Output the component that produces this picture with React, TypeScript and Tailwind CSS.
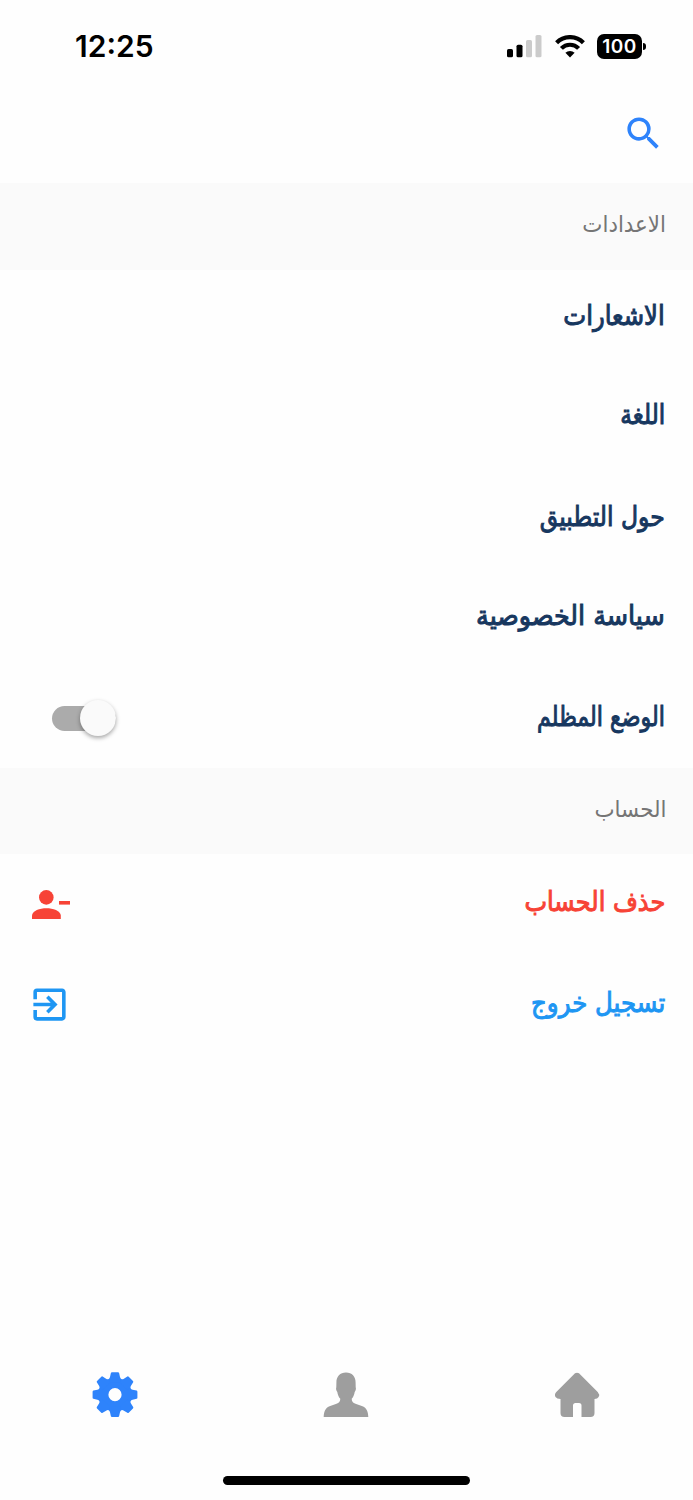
import React from 'react';
import { MdExitToApp, MdSearch } from 'react-icons/md';

interface SettingRowProps {
  label: string;
  className?: string;
  labelClass?: string;
  children?: React.ReactNode;
}

function SignalIcon() {
  return (
    <svg width="35" height="23" viewBox="0 0 35 23">
      <rect x="0" y="14" width="6" height="8.3" rx="1.6" fill="#000" />
      <rect x="9.5" y="9.7" width="6" height="12.6" rx="1.6" fill="#000" />
      <rect x="19" y="5" width="6" height="17.3" rx="1.6" fill="#cbcbcb" />
      <rect x="28.5" y="0" width="6" height="22.3" rx="1.6" fill="#cbcbcb" />
    </svg>
  );
}

function WifiIcon() {
  return (
    <svg width="30" height="23" viewBox="0 0 30 23" fill="none" stroke="#000" strokeWidth="4.2">
      <path d="M1.6 7.7a18.8 18.8 0 0 1 26.8 0" />
      <path d="M6.4 13.4a12 12 0 0 1 17.2 0" />
      <path d="M10.4 17.8a6.6 6.6 0 0 1 9.2 0L15 22.4z" fill="#000" stroke="none" />
    </svg>
  );
}

function RemoveUserIcon() {
  return (
    <svg width="38" height="30" viewBox="0 0 38 30" fill="#f74336">
      <circle cx="14.3" cy="7.4" r="7.3" />
      <path d="M0 29v-3.4C0 20.7 8 18.2 14.4 18.2S28.8 20.7 28.8 25.6V29z" />
      <rect x="27" y="11" width="11" height="3.6" />
    </svg>
  );
}

function GearIcon() {
  return (
    <svg width="46" height="46" viewBox="-23 -22.7 46 46" fill="#2e83fb">
      <path
        fillRule="evenodd"
        d="M0-16.6A16.6 16.6 0 1 0 0 16.6A16.6 16.6 0 1 0 0-16.6ZM0-6.6A6.6 6.6 0 1 1 0 6.6A6.6 6.6 0 1 1 0-6.6Z"
      />
      {[0, 45, 90, 135, 180, 225, 270, 315].map((angle) => (
        <path
          key={angle}
          transform={`rotate(${angle})`}
          d="M-3-22.4H3Q3.9-22.4 4.1-21.6L5-17.6Q5.3-16.2 6.5-15.4L5-12H-5L-6.5-15.4Q-5.3-16.2-5-17.6L-4.1-21.6Q-3.9-22.4-3-22.4Z"
        />
      ))}
    </svg>
  );
}

function PersonIcon() {
  return (
    <svg width="46" height="46" viewBox="0 0 46 46" fill="#9e9e9e">
      <path d="M23 .5C17 .5 13.4 4.5 13.4 10.5L13.3 15.2C12.8 16 13.1 18.5 14.3 20C14.8 23 15.6 25 17.3 26.8C17.3 29.5 16 31 13.5 31.8L6.5 34.3C2 36.3 .9 40 .7 45H45.3C45.1 40 44 36.3 39.5 34.3L32.5 31.8C30 31 28.7 29.5 28.7 26.8C30.4 25 31.2 23 31.7 20C32.9 18.5 33.2 16 32.7 15.2L32.6 10.5C32.6 4.5 29 .5 23 .5Z" />
    </svg>
  );
}

function HomeIcon() {
  return (
    <svg width="46" height="46" viewBox="0 0 46 46" fill="#9e9e9e">
      <path d="M21 1.3Q23 0 25 1.3L43.7 20Q46 22.5 44.6 25Q43.5 27 40.5 27V41Q40.5 45 36.5 45H27.5V33.5Q27.5 31 25 31H21.5Q19 31 19 33.5V45H10.5Q6.5 45 6.5 41V27Q2.8 27 1.5 25Q0 22.5 2.3 20Z" />
    </svg>
  );
}

function SectionTitle({ title, className = '' }: { title: string; className?: string }) {
  return (
    <div className={`flex items-center bg-[#fafafa] pr-[27px] pb-1 text-[23px] text-[#757575] ${className}`}>
      <span className="block origin-right scale-x-[0.93]">{title}</span>
    </div>
  );
}

function SettingRow({ label, className = 'text-[#17375f]', labelClass = '', children }: SettingRowProps) {
  return (
    <div className={`flex h-[100px] items-center justify-between pr-7 ${className}`}>
      <span
        className={`block origin-right text-[27px] whitespace-nowrap [-webkit-text-stroke:1px_currentColor] ${labelClass}`}
      >
        {label}
      </span>
      {children}
    </div>
  );
}

export default function App() {
  return (
    <div
      dir="rtl"
      className="flex h-[1500px] w-[693px] flex-col overflow-hidden bg-[#fefefe] font-['DejaVu_Sans',sans-serif]"
    >
      <div dir="ltr" className="flex h-[93px] items-center justify-between pr-[47px] pl-[75px] font-['Inter',sans-serif]">
        <span className="text-[30px] font-semibold">12:25</span>
        <div className="flex items-center">
          <SignalIcon />
          <span className="ml-[13px]">
            <WifiIcon />
          </span>
          <span className="ml-3 flex h-[25px] w-[45px] items-center justify-center rounded-[7px] bg-black pt-px text-[19px] font-semibold tracking-[0.5px] text-white">
            100
          </span>
          <span className="ml-px h-[7px] w-[3px] rounded-r-full bg-black" />
        </div>
      </div>

      <div className="flex h-[90px] items-start pt-[19px] pr-[28px]">
        <MdSearch className="size-[43px] text-[#2e83fb]" />
      </div>

      <SectionTitle title="الاعدادات" className="h-[87px]" />
      <SettingRow label="الاشعارات" labelClass="mb-2 scale-x-[0.9]" />
      <SettingRow label="اللغة" labelClass="mb-2.5 scale-x-[0.86]" />
      <SettingRow label="حول التطبيق" labelClass="mb-1.5 scale-x-[0.87]" />
      <SettingRow label="سياسة الخصوصية" labelClass="mb-2 scale-x-[0.94]" />
      <SettingRow label="الوضع المظلم" className="-mt-0.5 text-[#17375f]" labelClass="mb-0.5 scale-x-[0.82]">
        <span className="ml-[52px] flex h-[25px] w-[64px] items-center rounded-full bg-[#ababab]">
          <span className="size-9 shrink-0 rounded-full bg-[#fafafa] shadow-[0_2px_4px_rgba(0,0,0,0.35)]" />
        </span>
      </SettingRow>

      <SectionTitle title="الحساب" className="h-[86px]" />
      <SettingRow label="حذف الحساب" className="text-[#f74336]" labelClass="mb-1 scale-x-[0.89]">
        <span className="mt-0.5 ml-8">
          <RemoveUserIcon />
        </span>
      </SettingRow>
      <SettingRow label="تسجيل خروج" className="text-[#1e96f3]" labelClass="mb-0.5 scale-x-[0.905]">
        <MdExitToApp className="ml-7 size-[43px]" />
      </SettingRow>

      <nav dir="ltr" className="mt-auto flex h-[92px] justify-around pr-px">
        <GearIcon />
        <PersonIcon />
        <HomeIcon />
      </nav>
      <div className="flex h-9 justify-center pt-3">
        <span className="h-[9px] w-[247px] rounded-full bg-black" />
      </div>
    </div>
  );
}
